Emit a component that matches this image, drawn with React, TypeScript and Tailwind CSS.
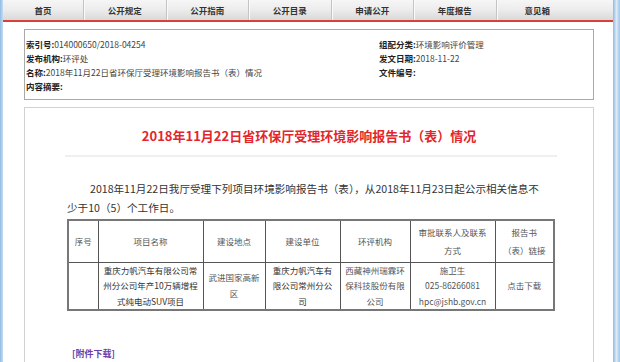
export default function App() {
  const navItems = ["首页", "公开规定", "公开指南", "公开目录", "申请公开", "年度报告", "意见箱"];

  return (
    <div
      className="flex min-h-[362px] w-full overflow-hidden"
      style={{ fontFamily: '"Noto Sans CJK SC", "Noto Sans", sans-serif' }}
    >
      <div className="w-[3px] shrink-0 bg-gradient-to-r from-[#8fbbe6] to-[#c6dcf1]" />
      <div className="w-[610px] shrink-0 bg-white">
        {/* top menu */}
        <div className="flex h-[22px] border-b-2 border-[#d8403a] bg-gradient-to-b from-[#f6f6f6] via-[#ececec] to-[#d9d9d9]">
          {navItems.map((item, i) => (
            <div
              key={item}
              className={
                "flex h-[20px] items-center justify-center text-[8.5px] font-bold text-[#333] " +
                (i === 0 ? "w-[80px]" : "w-[82.5px] border-l border-[#c4c4c4] shadow-[inset_1px_0_0_#fafafa]")
              }
            >
              {item}
            </div>
          ))}
        </div>

        {/* document meta */}
        <div className="ml-[21px] mt-[7px] w-[570px] border border-[#a9a9a9] pb-[6px] pl-[1px] pt-[7px] text-[8.5px] leading-[14px] text-[#444]">
          <div className="grid grid-cols-[353px_1fr]">
            <div>
              <div>
                <span className="font-bold text-[#222]">索引号:</span>014000650/2018-04254
              </div>
              <div>
                <span className="font-bold text-[#222]">发布机构:</span>环评处
              </div>
              <div>
                <span className="font-bold text-[#222]">名称:</span>2018年11月22日省环保厅受理环境影响报告书（表）情况
              </div>
              <div>
                <span className="font-bold text-[#222]">内容摘要:</span>
              </div>
            </div>
            <div>
              <div>
                <span className="font-bold text-[#222]">组配分类:</span>环境影响评价管理
              </div>
              <div>
                <span className="font-bold text-[#222]">发文日期:</span>2018-11-22
              </div>
              <div>
                <span className="font-bold text-[#222]">文件编号:</span>
              </div>
            </div>
          </div>
        </div>

        {/* article */}
        <div className="ml-[21px] mt-[7px] h-[280px] w-[570px] border border-[#d2d2d2] pt-[18px]">
          <h1 className="text-center text-[13px] font-bold leading-[20px] text-[#e3262b]">
            2018年11月22日省环保厅受理环境影响报告书（表）情况
          </h1>
          <div className="ml-[40px] w-[492px]">
            <div className="mt-[9px] h-[2px] bg-[#efefef]" />
            <p className="mt-[22px] whitespace-nowrap pl-[2px] text-[10.6px] leading-[19px] text-[#333]">
              <span className="pl-[23px]">2018年11月22日我厅受理下列项目环境影响报告书（表），从2018年11月23日起公示相关信息不</span>
              <br />
              少于10（5）个工作日。
            </p>
            <table className="ml-[2px] mt-[2px] w-[486px] table-fixed border-collapse border-2 border-[#777] text-center text-[8.5px] text-[#555]">
              <colgroup>
                <col className="w-[30px]" />
                <col className="w-[105px]" />
                <col className="w-[62px]" />
                <col className="w-[75px]" />
                <col className="w-[70px]" />
                <col className="w-[85px]" />
                <col className="w-[59px]" />
              </colgroup>
              <tbody>
                <tr className="h-[42px] leading-[18px]">
                  <td className="border border-[#555]">序号</td>
                  <td className="border border-[#555]">项目名称</td>
                  <td className="border border-[#555]">建设地点</td>
                  <td className="border border-[#555]">建设单位</td>
                  <td className="border border-[#555]">环评机构</td>
                  <td className="border border-[#555]">
                    审批联系人及联系
                    <br />
                    方式
                  </td>
                  <td className="border border-[#555]">
                    报告书
                    <br />
                    （表）链接
                  </td>
                </tr>
                <tr className="h-[47px] whitespace-nowrap leading-[15.5px]">
                  <td className="border border-[#555]"></td>
                  <td className="border border-[#555] text-[#333]">
                    重庆力帆汽车有限公司常
                    <br />
                    州分公司年产10万辆增程
                    <br />
                    式纯电动SUV项目
                  </td>
                  <td className="border border-[#555]">
                    武进国家高新
                    <br />区
                  </td>
                  <td className="border border-[#555] text-[#333]">
                    重庆力帆汽车有
                    <br />
                    限公司常州分公
                    <br />司
                  </td>
                  <td className="border border-[#555]">
                    西藏神州瑞霖环
                    <br />
                    保科技股份有限
                    <br />
                    公司
                  </td>
                  <td className="border border-[#555]">
                    施卫生
                    <br />
                    025-86266081
                    <br />
                    hpc@jshb.gov.cn
                  </td>
                  <td className="border border-[#555]">点击下载</td>
                </tr>
              </tbody>
            </table>
            <div className="mt-[36px] pl-[7px] text-[9px] font-bold leading-[14px] text-[#6a3da8]">[附件下载]</div>
          </div>
        </div>
      </div>
      <div className="w-[7px] shrink-0 bg-gradient-to-r from-[#8db9e2] via-[#dceaf7] to-[#9fc5e8]" />
    </div>
  );
}
